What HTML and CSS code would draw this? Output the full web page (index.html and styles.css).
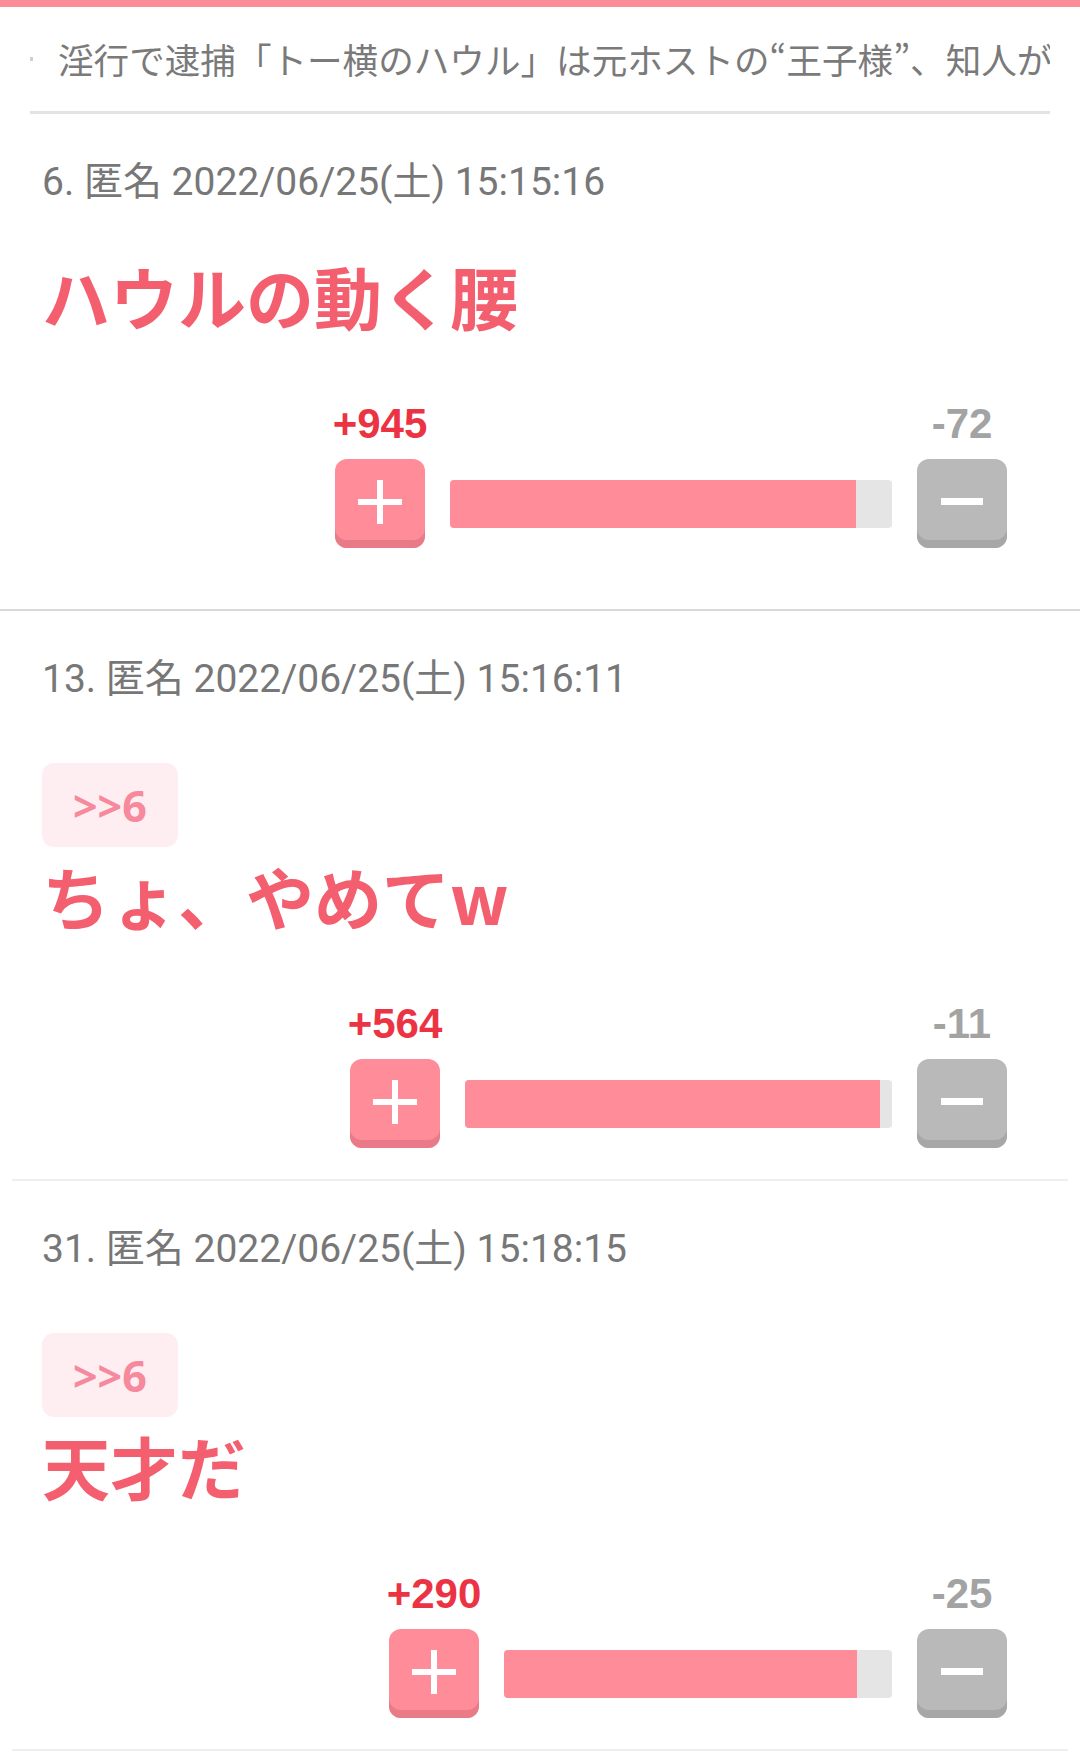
FILE: index.html
```html
<!DOCTYPE html>
<html lang="ja">
<head>
    <meta charset="UTF-8">
    <meta name="viewport" content="width=device-width, initial-scale=1.0">
    <title>トー横のハウル - コメント</title>
    <link rel="stylesheet" href="styles.css">
</head>
<body>
    <div class="topbar"></div>

    <!-- 記事タイトル (横スクロール表示) -->
    <div class="headline">
        <span class="headline-edge"></span>
        <span class="headline-text">淫行で逮捕「トー横のハウル」は元ホストの“王子様”、知人が</span>
    </div>

    <div class="thread">
        <div class="comment comment-first">
            <div class="meta">6. 匿名 2022/06/25(土) 15:15:16</div>
            <div class="body">
                <p class="text">ハウルの動く腰</p>
            </div>
            <div class="votes">
                <div class="vote">
                    <span class="count count-plus">+945</span>
                    <button class="btn btn-plus" aria-label="プラス">
                        <svg width="44" height="44" viewBox="0 0 44 44"><rect x="19" y="0" width="6" height="44" fill="#fff"/><rect x="0" y="19" width="44" height="6" fill="#fff"/></svg>
                    </button>
                </div>
                <div class="bar" style="width: 442px"><div class="bar-fill" style="width: 91.9%"></div></div>
                <div class="vote">
                    <span class="count count-minus">-72</span>
                    <button class="btn btn-minus" aria-label="マイナス">
                        <svg width="42" height="7" viewBox="0 0 42 7"><rect x="0" y="0" width="42" height="7" fill="#fff"/></svg>
                    </button>
                </div>
            </div>
        </div>

        <div class="comment">
            <div class="meta">13. 匿名 2022/06/25(土) 15:16:11</div>
            <div class="body">
                <a class="anchor">&gt;&gt;6</a>
                <p class="text">ちょ、やめてw</p>
            </div>
            <div class="votes">
                <div class="vote">
                    <span class="count count-plus">+564</span>
                    <button class="btn btn-plus" aria-label="プラス">
                        <svg width="44" height="44" viewBox="0 0 44 44"><rect x="19" y="0" width="6" height="44" fill="#fff"/><rect x="0" y="19" width="44" height="6" fill="#fff"/></svg>
                    </button>
                </div>
                <div class="bar" style="width: 427px"><div class="bar-fill" style="width: 97.2%"></div></div>
                <div class="vote">
                    <span class="count count-minus">-11</span>
                    <button class="btn btn-minus" aria-label="マイナス">
                        <svg width="42" height="7" viewBox="0 0 42 7"><rect x="0" y="0" width="42" height="7" fill="#fff"/></svg>
                    </button>
                </div>
            </div>
        </div>

        <div class="comment">
            <div class="meta">31. 匿名 2022/06/25(土) 15:18:15</div>
            <div class="body">
                <a class="anchor">&gt;&gt;6</a>
                <p class="text">天才だ</p>
            </div>
            <div class="votes">
                <div class="vote">
                    <span class="count count-plus">+290</span>
                    <button class="btn btn-plus" aria-label="プラス">
                        <svg width="44" height="44" viewBox="0 0 44 44"><rect x="19" y="0" width="6" height="44" fill="#fff"/><rect x="0" y="19" width="44" height="6" fill="#fff"/></svg>
                    </button>
                </div>
                <div class="bar" style="width: 388px"><div class="bar-fill" style="width: 91%"></div></div>
                <div class="vote">
                    <span class="count count-minus">-25</span>
                    <button class="btn btn-minus" aria-label="マイナス">
                        <svg width="42" height="7" viewBox="0 0 42 7"><rect x="0" y="0" width="42" height="7" fill="#fff"/></svg>
                    </button>
                </div>
            </div>
        </div>
    </div>
</body>
</html>
```

FILE: styles.css
```css
body {
    margin: 0;
    padding: 0;
    background: #fff;
    font-family: 'Roboto', 'Noto Sans CJK JP', sans-serif;
    color: #757575;
}

.topbar {
    height: 7px;
    background-color: #fb8d99;
}

.headline {
    display: flex;
    align-items: center;
    height: 104px;
    margin: 0 30px;
    border-bottom: 3px solid #e3e3e3;
    overflow: hidden;
}

.headline-edge {
    flex: none;
    width: 3px;
    height: 4px;
    margin-right: 25px;
    background-color: #cfcfcf;
}

.headline-text {
    flex: none;
    font-family: 'Noto Sans CJK JP', sans-serif;
    font-size: 35.6px;
    line-height: 44px;
    color: #7a7a7a;
    white-space: nowrap;
}

.comment {
    margin: 0 12px;
    padding: 43px 61px 31px 30px;
    border-bottom: 2px solid #eeeeee;
}

.comment-first {
    margin: 0;
    padding: 43px 73px 61px 42px;
    border-bottom-color: #d9d9d9;
}

.meta {
    font-size: 39px;
    line-height: 50px;
    color: #777;
}

.body {
    margin-top: 49px;
}

.anchor {
    display: inline-flex;
    align-items: center;
    height: 84px;
    margin-top: 10px;
    margin-bottom: 9px;
    padding: 0 31px;
    border-radius: 12px;
    background-color: #ffeef1;
    color: #f6899b;
    font-family: 'Open Sans', sans-serif;
    font-weight: 700;
    font-size: 43px;
}

.text {
    margin: 0;
    font-family: 'Noto Sans CJK JP', sans-serif;
    font-weight: 700;
    font-size: 68px;
    line-height: 80px;
    color: #f35f6f;
}

.votes {
    display: flex;
    justify-content: flex-end;
    align-items: flex-end;
    gap: 25px;
    margin-top: 64px;
}

.vote {
    display: flex;
    flex-direction: column;
    align-items: center;
    gap: 11px;
    width: 90px;
}

.count {
    font-family: 'Liberation Sans', Arial, sans-serif;
    font-weight: 700;
    font-size: 42px;
    line-height: 48px;
    white-space: nowrap;
}

.count-plus {
    color: #ec3344;
}

.count-minus {
    color: #a3a3a3;
}

.btn {
    display: flex;
    align-items: center;
    justify-content: center;
    width: 90px;
    height: 89px;
    padding: 0 0 4px;
    border: none;
    border-radius: 12px;
    cursor: pointer;
}

.btn-plus {
    background-color: #ff8d99;
    box-shadow: inset 0 -8px 0 #e97b88;
}

.btn-minus {
    background-color: #b9b9b9;
    box-shadow: inset 0 -8px 0 #a7a7a7;
}

.bar {
    flex: none;
    height: 48px;
    margin-bottom: 20px;
    border-radius: 4px;
    background-color: #e5e5e5;
    overflow: hidden;
}

.bar-fill {
    height: 100%;
    background-color: #ff8d99;
}
```
